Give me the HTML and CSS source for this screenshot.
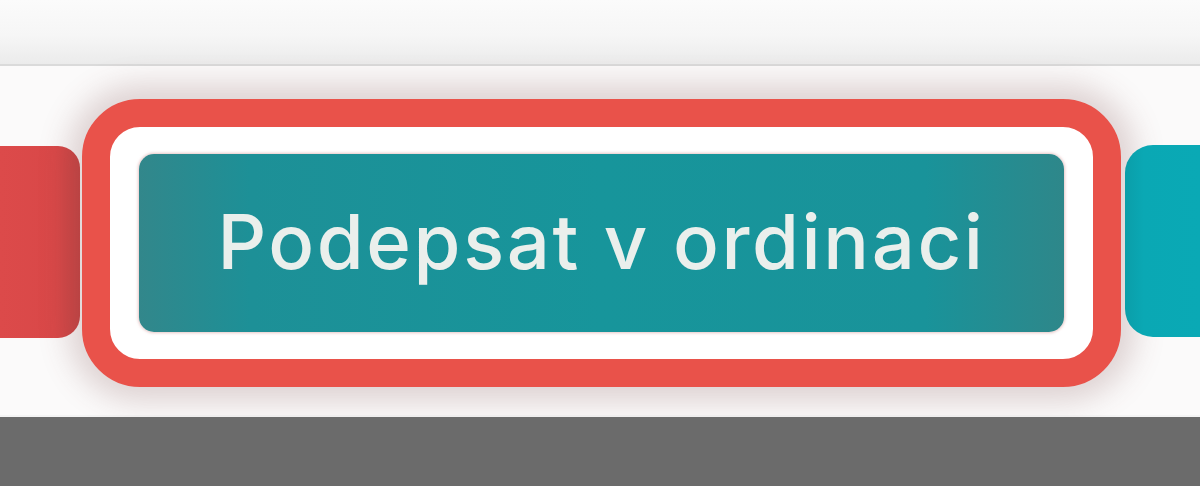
FILE: index.html
```html
<!DOCTYPE html>
<html lang="cs">
<head>
<meta charset="utf-8">
<title>Podepsat v ordinaci</title>
<link rel="stylesheet" href="styles.css">
</head>
<body>
<div class="page">
  <header class="topbar"></header>
  <main class="panel">
    <div class="btn-side btn-red"></div>
    <div class="ring">
      <button class="btn-main" type="button">Podepsat v ordinaci</button>
    </div>
    <div class="btn-side btn-cyan"></div>
  </main>
  <footer class="footer"></footer>
</div>
</body>
</html>
```
FILE: styles.css
```css
html, body {
  margin: 0;
  padding: 0;
  background: #ffffff;
}
.page {
  width: 1200px;
  height: 486px;
  overflow: hidden;
  display: flex;
  flex-direction: column;
}
.topbar {
  height: 64px;
  flex: none;
  background: linear-gradient(to bottom, #fbfbfb 0%, #f6f6f6 55%, #ebebeb 100%);
  border-bottom: 2px solid #dadada;
}
.panel {
  flex: none;
  height: 349px;
  background: #fbfafa;
  display: flex;
  align-items: center;
  border-bottom: 2px solid #f4f4f4;
}
.btn-side {
  flex: none;
  height: 192px;
}
.btn-red {
  width: 80px;
  margin-top: 2px;
  margin-right: 2px;
  border-radius: 0 22px 22px 0;
  background: linear-gradient(to right, #dc4a4a 0%, #d94848 70%, #c94444 100%);
}
.btn-cyan {
  flex: 1;
  margin-left: 4px;
  border-radius: 28px 0 0 28px;
  background: linear-gradient(to right, #0b9ea9 0%, #0aa8b4 25%, #0aa9b5 100%);
}
.ring {
  flex: none;
  margin-top: 5px;
  border: 28px solid #e9524a;
  border-radius: 58px;
  padding: 27px 29px;
  background: #ffffff;
  box-shadow: 0 0 30px 14px rgba(120, 70, 70, 0.22);
}
.btn-main {
  display: flex;
  align-items: center;
  justify-content: center;
  width: 925px;
  height: 178px;
  border: none;
  border-radius: 15px;
  padding: 0 0 4px 0;
  background: linear-gradient(to right, #32878b 0%, #1d9097 12%, #17959b 50%, #19939a 85%, #2e878a 100%);
  box-shadow: 0 0 3px 1px rgba(215, 160, 160, 0.6);
  color: #eaefec;
  font-family: "Inter", "Open Sans", sans-serif;
  font-weight: 500;
  font-size: 76px;
  letter-spacing: 2.6px;
  cursor: pointer;
}
.footer {
  flex: 1;
  background: #6b6b6b;
}
```
